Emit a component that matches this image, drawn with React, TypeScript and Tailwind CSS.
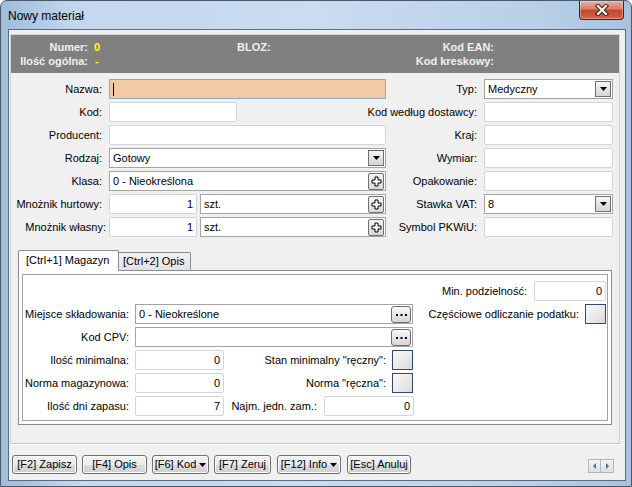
import React from "react";

const FONT = "font-['Liberation_Sans',Arial,sans-serif]";

function DropBtn() {
  return (
    <div className="w-[16px] h-[16px] border border-[#6f6f6f] bg-[linear-gradient(to_bottom,#f6f6f6,#d4d4d4)] flex items-center justify-center">
      <svg width="7" height="4" viewBox="0 0 7 4">
        <path d="M0 0h7L3.5 4z" fill="#000" />
      </svg>
    </div>
  );
}

function PlusBtn() {
  return (
    <div className="w-[16px] h-[17px] rounded-[2px] border border-[#6f6f6f] bg-[linear-gradient(to_bottom,#f6f6f6,#d8d8d8)] flex items-center justify-center">
      <svg width="11" height="11" viewBox="0 0 11 11">
        <path d="M4 1h3v3h3v3H7v3H4V7H1V4h3z" fill="#fff" stroke="#000" strokeWidth="1" />
      </svg>
    </div>
  );
}

function DotsBtn() {
  return (
    <div className="w-[20px] h-[17px] rounded-[3px] border border-[#6f6f6f] bg-[linear-gradient(to_bottom,#f8f8f8,#d6d6d6)] flex items-end justify-center pb-[6px]">
      <svg width="11" height="2" viewBox="0 0 11 2">
        <rect x="0" y="0" width="2" height="2" fill="#000" />
        <rect x="4.5" y="0" width="2" height="2" fill="#000" />
        <rect x="9" y="0" width="2" height="2" fill="#000" />
      </svg>
    </div>
  );
}

function Check() {
  return (
    <div className="w-[21px] h-[20px] border border-[#2d4a6c] bg-[linear-gradient(135deg,#fbfbfb,#dadada)]" />
  );
}

function Edit({
  w,
  value,
  right,
  className = "",
}: {
  w: number;
  value?: string;
  right?: boolean;
  className?: string;
}) {
  return (
    <div
      className={`h-[20px] shrink-0 border border-[#d3d5da] rounded-[2px] bg-white flex items-center px-[3px] ${
        right ? "justify-end" : ""
      } ${className}`}
      style={{ width: w }}
    >
      {value}
    </div>
  );
}

function Combo({
  w,
  value,
  btn,
}: {
  w: number;
  value?: string;
  btn: "drop" | "plus" | "dots";
}) {
  return (
    <div
      className="h-[20px] shrink-0 border border-[#a4a4a4] bg-white flex items-center pl-[3px] pr-[1px]"
      style={{ width: w }}
    >
      <span className="flex-1">{value}</span>
      {btn === "drop" && <DropBtn />}
      {btn === "plus" && <PlusBtn />}
      {btn === "dots" && <DotsBtn />}
    </div>
  );
}

function Label({ w, children, className = "" }: { w: number; children: React.ReactNode; className?: string }) {
  return (
    <div className={`shrink-0 flex justify-end whitespace-nowrap ${className}`} style={{ width: w }}>
      <span className="shrink-0">{children}</span>
    </div>
  );
}

function Btn({ w, children, ml }: { w: number; children: React.ReactNode; ml: string }) {
  return (
    <div
      className={`${ml} h-[19px] rounded-[3px] border border-[#707070] bg-[linear-gradient(to_bottom,#f3f3f3_0%,#ebebeb_50%,#dcdcdc_51%,#cfcfcf_100%)] shadow-[inset_0_0_0_1px_#fbfbfb] flex items-center justify-center gap-[3px] text-[11px] text-black`}
      style={{ width: w }}
    >
      {children}
    </div>
  );
}

function Caret() {
  return (
    <svg width="7" height="4" viewBox="0 0 7 4">
      <path d="M0 0h7L3.5 4z" fill="#000" />
    </svg>
  );
}

export default function App() {
  return (
    <div
      className={`${FONT} w-[632px] h-[487px] overflow-hidden rounded-t-[7px] border border-[#4a5868] bg-[linear-gradient(to_right,#9fbcdb_0%,#c3d8ee_12%,#c9dcf0_50%,#b9d0e8_85%,#a8c2de_100%)] flex flex-col text-[11px] text-black`}
    >
      {/* Title bar */}
      <div className="h-[28px] flex items-start shrink-0">
        <div className="pl-[7px] pt-[7px] text-[12px] leading-[16px] text-black">Nowy materiał</div>
        <div className="ml-auto mr-[7px] w-[45px] h-[19px] rounded-b-[4px] border border-t-0 border-[#4a2118] bg-[linear-gradient(to_bottom,#eab0a1_0%,#d97a63_45%,#c4452b_52%,#d2664a_100%)] shadow-[inset_0_0_0_1px_rgba(255,255,255,0.35)] flex items-center justify-center">
          <svg width="14" height="12" viewBox="0 0 14 12">
            <path d="M3 2l8 8M11 2l-8 8" stroke="#3a1d16" strokeWidth="4.2" strokeLinecap="square" />
            <path d="M3 2l8 8M11 2l-8 8" stroke="#fff" strokeWidth="2.2" strokeLinecap="square" />
          </svg>
        </div>
      </div>

      {/* Client */}
      <div className="ml-[7px] w-[618px] h-[452px] border border-[#5b6c80] bg-[#f0f0f0] flex flex-col shrink-0">
        {/* Form panel */}
        <div className="ml-[1px] mt-[4px] w-[610px] h-[410px] border border-[#d2d2d2] border-b-[#c8c8c8] flex flex-col shrink-0">
          {/* Gray header */}
          <div className="h-[38px] bg-[#808080] text-[#f0f0f0] font-bold pt-[5px] leading-[14px] shrink-0">
            <div className="flex">
              <div className="w-[77px] text-right">Numer:</div>
              <div className="w-[149px] pl-[6px] text-[#ffff00]">0</div>
              <div className="w-[100px]">BLOZ:</div>
              <div className="w-[157px] text-right">Kod EAN:</div>
            </div>
            <div className="flex">
              <div className="w-[77px] text-right">Ilość ogólna:</div>
              <div className="w-[149px] pl-[7px] text-[#ffff00]">-</div>
              <div className="w-[100px]" />
              <div className="w-[157px] text-right">Kod kreskowy:</div>
            </div>
          </div>

          {/* Rows */}
          <div className="mt-[6px] flex flex-col gap-[3px]">
            <div className="h-[20px] flex items-center">
              <Label w={91}>Nazwa:</Label>
              <div className="ml-[7px] w-[277px] h-[20px] border border-[#8fa9c8] bg-[#f2cba6] flex items-center pl-[3px]">
                <div className="w-[1px] h-[13px] bg-black" />
              </div>
              <Label w={91}>Typ:</Label>
              <div className="ml-[7px]">
                <Combo w={129} value="Medyczny" btn="drop" />
              </div>
            </div>
            <div className="h-[20px] flex items-center">
              <Label w={91}>Kod:</Label>
              <Edit w={128} className="ml-[7px]" />
              <div className="w-[149px] shrink-0" />
              <Label w={91}>Kod według dostawcy:</Label>
              <Edit w={129} className="ml-[7px]" />
            </div>
            <div className="h-[20px] flex items-center">
              <Label w={91}>Producent:</Label>
              <Edit w={277} className="ml-[7px]" />
              <Label w={91}>Kraj:</Label>
              <Edit w={129} className="ml-[7px]" />
            </div>
            <div className="h-[20px] flex items-center">
              <Label w={91}>Rodzaj:</Label>
              <div className="ml-[7px]">
                <Combo w={277} value="Gotowy" btn="drop" />
              </div>
              <Label w={91}>Wymiar:</Label>
              <Edit w={129} className="ml-[7px]" />
            </div>
            <div className="h-[20px] flex items-center">
              <Label w={91}>Klasa:</Label>
              <div className="ml-[7px]">
                <Combo w={277} value="0 - Nieokreślona" btn="plus" />
              </div>
              <Label w={91}>Opakowanie:</Label>
              <Edit w={129} className="ml-[7px]" />
            </div>
            <div className="h-[20px] flex items-center">
              <Label w={91}>Mnożnik hurtowy:</Label>
              <Edit w={88} value="1" right className="ml-[7px]" />
              <div className="ml-[3px]">
                <Combo w={186} value="szt." btn="plus" />
              </div>
              <Label w={91}>Stawka VAT:</Label>
              <div className="ml-[7px]">
                <Combo w={129} value="8" btn="drop" />
              </div>
            </div>
            <div className="h-[20px] flex items-center">
              <Label w={91}>
                <span className="mr-[-4px]">Mnożnik własny:</span>
              </Label>
              <Edit w={88} value="1" right className="ml-[7px]" />
              <div className="ml-[3px]">
                <Combo w={186} value="szt." btn="plus" />
              </div>
              <Label w={91}>Symbol PKWiU:</Label>
              <Edit w={129} className="ml-[7px]" />
            </div>
          </div>

          {/* Tabs */}
          <div className="ml-[7px] mt-[13px] w-[594px] flex flex-col">
            <div className="h-[20px] flex items-end relative z-10">
              <div className="w-[101px] h-[21px] mb-[-1px] border border-b-0 border-[#898c95] bg-white rounded-t-[2px] flex items-center pl-[7px] pb-[2px]">
                [Ctrl+1] Magazyn
              </div>
              <div className="w-[72px] h-[18px] border border-l-0 border-b-0 border-[#898c95] rounded-tr-[2px] bg-[linear-gradient(to_bottom,#f2f2f2,#e3e3e3)] flex items-center pl-[4px]">
                [Ctrl+2] Opis
              </div>
            </div>
            <div className="h-[155px] border border-[#898c95] bg-white p-[3px]">
              <div className="h-full border border-[#a0a0a0] flex">
                {/* Left column */}
                <div className="w-[391px] pt-[29px] flex flex-col gap-[3px]">
                  <div className="h-[20px] flex items-center">
                    <Label w={106}>Miejsce składowania:</Label>
                    <div className="ml-[6px]">
                      <Combo w={278} value="0 - Nieokreślone" btn="dots" />
                    </div>
                  </div>
                  <div className="h-[20px] flex items-center">
                    <Label w={106}>Kod CPV:</Label>
                    <div className="ml-[6px]">
                      <Combo w={278} btn="dots" />
                    </div>
                  </div>
                  <div className="h-[20px] flex items-center">
                    <Label w={106}>Ilość minimalna:</Label>
                    <Edit w={89} value="0" right className="ml-[6px]" />
                    <Label w={162}>Stan minimalny "ręczny":</Label>
                    <div className="ml-[6px]">
                      <Check />
                    </div>
                  </div>
                  <div className="h-[20px] flex items-center">
                    <Label w={106}>Norma magazynowa:</Label>
                    <Edit w={89} value="0" right className="ml-[6px]" />
                    <Label w={162}>Norma "ręczna":</Label>
                    <div className="ml-[6px]">
                      <Check />
                    </div>
                  </div>
                  <div className="h-[20px] flex items-center">
                    <Label w={106}>Ilość dni zapasu:</Label>
                    <Edit w={89} value="7" right className="ml-[6px]" />
                    <Label w={93}>Najm. jedn. zam.:</Label>
                    <Edit w={90} value="0" right className="ml-[7px]" />
                  </div>
                </div>
                {/* Right column */}
                <div className="w-[192px] pt-[6px] flex flex-col gap-[3px] items-end">
                  <div className="h-[20px] flex items-center">
                    <div className="whitespace-nowrap">Min. podzielność:</div>
                    <Edit w={72} value="0" right className="ml-[7px]" />
                  </div>
                  <div className="h-[20px] flex items-center">
                    <div className="whitespace-nowrap">Częściowe odliczanie podatku:</div>
                    <div className="ml-[6px]">
                      <Check />
                    </div>
                  </div>
                </div>
              </div>
            </div>
          </div>
        </div>
        <div className="h-[1px] bg-white shrink-0" />

        {/* Buttons */}
        <div className="mt-[10px] flex items-center">
          <Btn w={65} ml="ml-[3px]">[F2] Zapisz</Btn>
          <Btn w={65} ml="ml-[5px]">[F4] Opis</Btn>
          <Btn w={57} ml="ml-[5px]">
            [F6] Kod <Caret />
          </Btn>
          <Btn w={57} ml="ml-[5px]">[F7] Zeruj</Btn>
          <Btn w={64} ml="ml-[6px]">
            [F12] Info <Caret />
          </Btn>
          <Btn w={64} ml="ml-[6px]">[Esc] Anuluj</Btn>
          <div className="ml-auto mr-[11px] mt-[3px] flex">
            <div className="w-[13px] h-[14px] border border-[#b5b5b5] bg-[linear-gradient(to_bottom,#f4f4f4,#e0e0e0)] flex items-center justify-center">
              <svg width="3" height="6" viewBox="0 0 3 6">
                <path d="M3 0v6L0 3z" fill="#4a6fa8" />
              </svg>
            </div>
            <div className="w-[13px] h-[14px] border border-l-0 border-[#b5b5b5] bg-[linear-gradient(to_bottom,#f4f4f4,#e0e0e0)] flex items-center justify-center">
              <svg width="3" height="6" viewBox="0 0 3 6">
                <path d="M0 0v6l3-3z" fill="#4a6fa8" />
              </svg>
            </div>
          </div>
        </div>
      </div>
    </div>
  );
}
